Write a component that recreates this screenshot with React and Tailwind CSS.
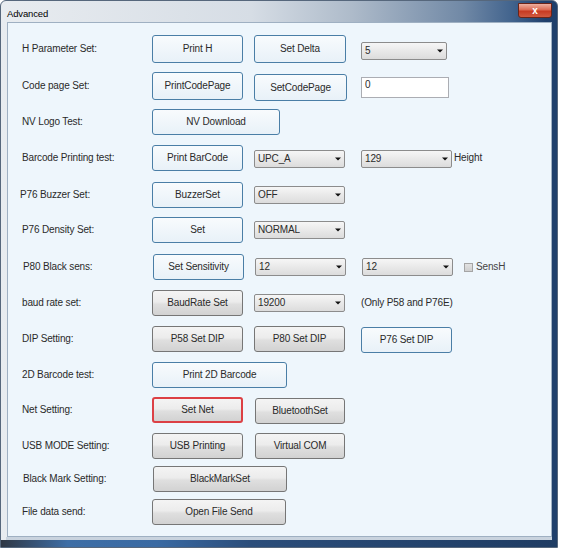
import React from "react";

const FONT = "font-['Liberation_Sans',Arial,sans-serif] tracking-[-0.15px]";

const BTN = {
  blue: "border border-[#4a7ea6] bg-[linear-gradient(to_bottom,#f8fbfd,#e8f1f8)]",
  gray: "border border-[#767676] bg-[linear-gradient(to_bottom,#f4f4f4_0%,#ececec_45%,#dfdfdf_55%,#d2d2d2_100%)]",
  red: "border-2 border-[#dc4045] bg-[linear-gradient(to_bottom,#f4f4f4_0%,#ececec_45%,#dfdfdf_55%,#d2d2d2_100%)]",
};

function Btn({ w = "w-[91px]", v = "blue", className = "", children }) {
  return (
    <div
      className={`h-[26px] shrink-0 rounded-[3px] flex items-center justify-center text-[10px] leading-none text-[#2a2a2a] ${BTN[v]} ${w} ${className}`}
    >
      {children}
    </div>
  );
}

function Arrow() {
  return (
    <svg width="6" height="4" viewBox="0 0 6 4" className="shrink-0">
      <path d="M0 0.5 L6 0.5 L3 3.5 Z" fill="#111" />
    </svg>
  );
}

function Sel({ w = "w-[91px]", className = "", children }) {
  return (
    <div
      className={`h-[18px] shrink-0 rounded-[2px] border border-[#8c8c8c] bg-[linear-gradient(to_bottom,#f6f6f6,#dcdcdc)] flex items-center justify-between pl-[3px] pr-[3px] text-[10px] leading-none text-[#2a2a2a] ${w} ${className}`}
    >
      <span>{children}</span>
      <Arrow />
    </div>
  );
}

function Label({ children, className = "" }) {
  return (
    <div className={`w-[130px] shrink-0 text-[10px] leading-none text-[#2a2a2a] ${className}`}>
      {children}
    </div>
  );
}

function Row({ className = "", children }) {
  return <div className={`h-[26px] flex items-center ${className}`}>{children}</div>;
}

export default function App() {
  return (
    <div className={`w-[561px] h-[550px] bg-white ${FONT}`}>
      <div className="w-[558px] h-[548px] flex flex-col rounded-t-[6px] border border-[#56677c] bg-[linear-gradient(to_right,#e8ecf0_0%,#d6dde5_45%,#aebbca_63%,#7189a6_83%,#41638d_92%,#1f3f6b_98%)]">
        {/* title bar */}
        <div className="h-[21px] shrink-0 flex items-start justify-between">
          <div className="pl-[6px] pt-[7px] text-[9.5px] leading-[12px] text-black">Advanced</div>
          <div className="mr-[5px] mt-[2px] w-[34px] h-[15px] rounded-b-[3px] border border-[#6b2418] bg-[linear-gradient(to_bottom,#eeb0a0_0%,#dc6a52_45%,#c73a22_55%,#d05a40_100%)] flex items-center justify-center text-white text-[10px] font-bold leading-none">
            x
          </div>
        </div>

        {/* client area */}
        <div className="flex-1 ml-[6px] mr-[5px] border border-[#9fb0c2] bg-[#eef6fc] pl-[14px] pt-[13px] flex flex-col">
          <Row>
            <Label>H Parameter Set:</Label>
            <Btn className="h-[28px]">Print H</Btn>
            <Btn w="w-[92px]" className="ml-[11px] h-[28px]">Set Delta</Btn>
            <Sel w="w-[86px]" className="ml-[15px] mt-[3px]">5</Sel>
          </Row>

          <Row className="mt-[11px]">
            <Label>Code page Set:</Label>
            <Btn className="h-[28px]">PrintCodePage</Btn>
            <Btn w="w-[93px]" className="ml-[11px] h-[27px] mt-[3px]">SetCodePage</Btn>
            <div className="ml-[14px] mt-[2px] w-[88px] h-[21px] bg-white border border-[#abadb3] pl-[3px] pt-[2px] text-[10px] leading-none text-[#2a2a2a]">
              0
            </div>
          </Row>

          <Row className="mt-[10px]">
            <Label>NV Logo Test:</Label>
            <Btn w="w-[128px]">NV Download</Btn>
          </Row>

          <Row className="mt-[10px]">
            <Label>Barcode Printing test:</Label>
            <Btn>Print BarCode</Btn>
            <Sel className="ml-[11px] mt-[1px]">UPC_A</Sel>
            <Sel className="ml-[16px] mt-[1px]">129</Sel>
            <span className="ml-[2px] text-[10px] leading-none text-[#2a2a2a]">Height</span>
          </Row>

          <Row className="mt-[11px]">
            <Label className="-ml-[2px] w-[132px]">P76 Buzzer Set:</Label>
            <Btn>BuzzerSet</Btn>
            <Sel className="ml-[11px]">OFF</Sel>
          </Row>

          <Row className="mt-[9px]">
            <Label>P76 Density Set:</Label>
            <Btn>Set</Btn>
            <Sel className="ml-[11px]">NORMAL</Sel>
          </Row>

          <Row className="mt-[11px]">
            <Label className="ml-[1px] w-[129px]">P80 Black sens:</Label>
            <Btn>Set Sensitivity</Btn>
            <Sel className="ml-[11px]">12</Sel>
            <Sel className="ml-[16px]">12</Sel>
            <div className="ml-[11px] w-[9px] h-[9px] border border-[#a5a5a5] bg-[linear-gradient(to_bottom,#e2e2e2,#cfcfcf)]" />
            <span className="ml-[3px] text-[10px] leading-none text-[#444]">SensH</span>
          </Row>

          <Row className="mt-[10px]">
            <Label>baud rate set:</Label>
            <Btn v="gray">BaudRate Set</Btn>
            <Sel className="ml-[11px]">19200</Sel>
            <span className="ml-[16px] text-[10px] leading-none text-[#2a2a2a]">(Only P58 and P76E)</span>
          </Row>

          <Row className="mt-[10px]">
            <Label>DIP Setting:</Label>
            <Btn v="gray">P58 Set DIP</Btn>
            <Btn v="gray" className="ml-[11px]">P80 Set DIP</Btn>
            <Btn className="ml-[16px] mt-[1px]">P76 Set DIP</Btn>
          </Row>

          <Row className="mt-[10px]">
            <Label>2D Barcode test:</Label>
            <Btn w="w-[135px]">Print 2D Barcode</Btn>
          </Row>

          <Row className="mt-[9px]">
            <Label>Net Setting:</Label>
            <Btn v="red">Set Net</Btn>
            <Btn v="gray" w="w-[90px]" className="ml-[12px] mt-[1px]">BluetoothSet</Btn>
          </Row>

          <Row className="mt-[10px]">
            <Label>USB MODE Setting:</Label>
            <Btn v="gray">USB Printing</Btn>
            <Btn v="gray" w="w-[90px]" className="ml-[12px]">Virtual COM</Btn>
          </Row>

          <Row className="mt-[7px]">
            <Label className="ml-[1px] w-[129px]">Black Mark Setting:</Label>
            <Btn v="gray" w="w-[134px]">BlackMarkSet</Btn>
          </Row>

          <Row className="mt-[7px]">
            <Label>File data send:</Label>
            <Btn v="gray" w="w-[134px]">Open File Send</Btn>
          </Row>
        </div>

        {/* bottom frame */}
        <div className="h-[10px] shrink-0 flex flex-col">
          <div className="h-[3px] ml-[5px] mr-[5px] bg-[#c9d3de]" />
          <div className="flex-1 bg-[linear-gradient(to_right,#2f3744_0%,#3e6ea6_12%,#3a6aa3_28%,#2b4d7a_45%,#1f3c63_100%)]" />
        </div>
      </div>
    </div>
  );
}
